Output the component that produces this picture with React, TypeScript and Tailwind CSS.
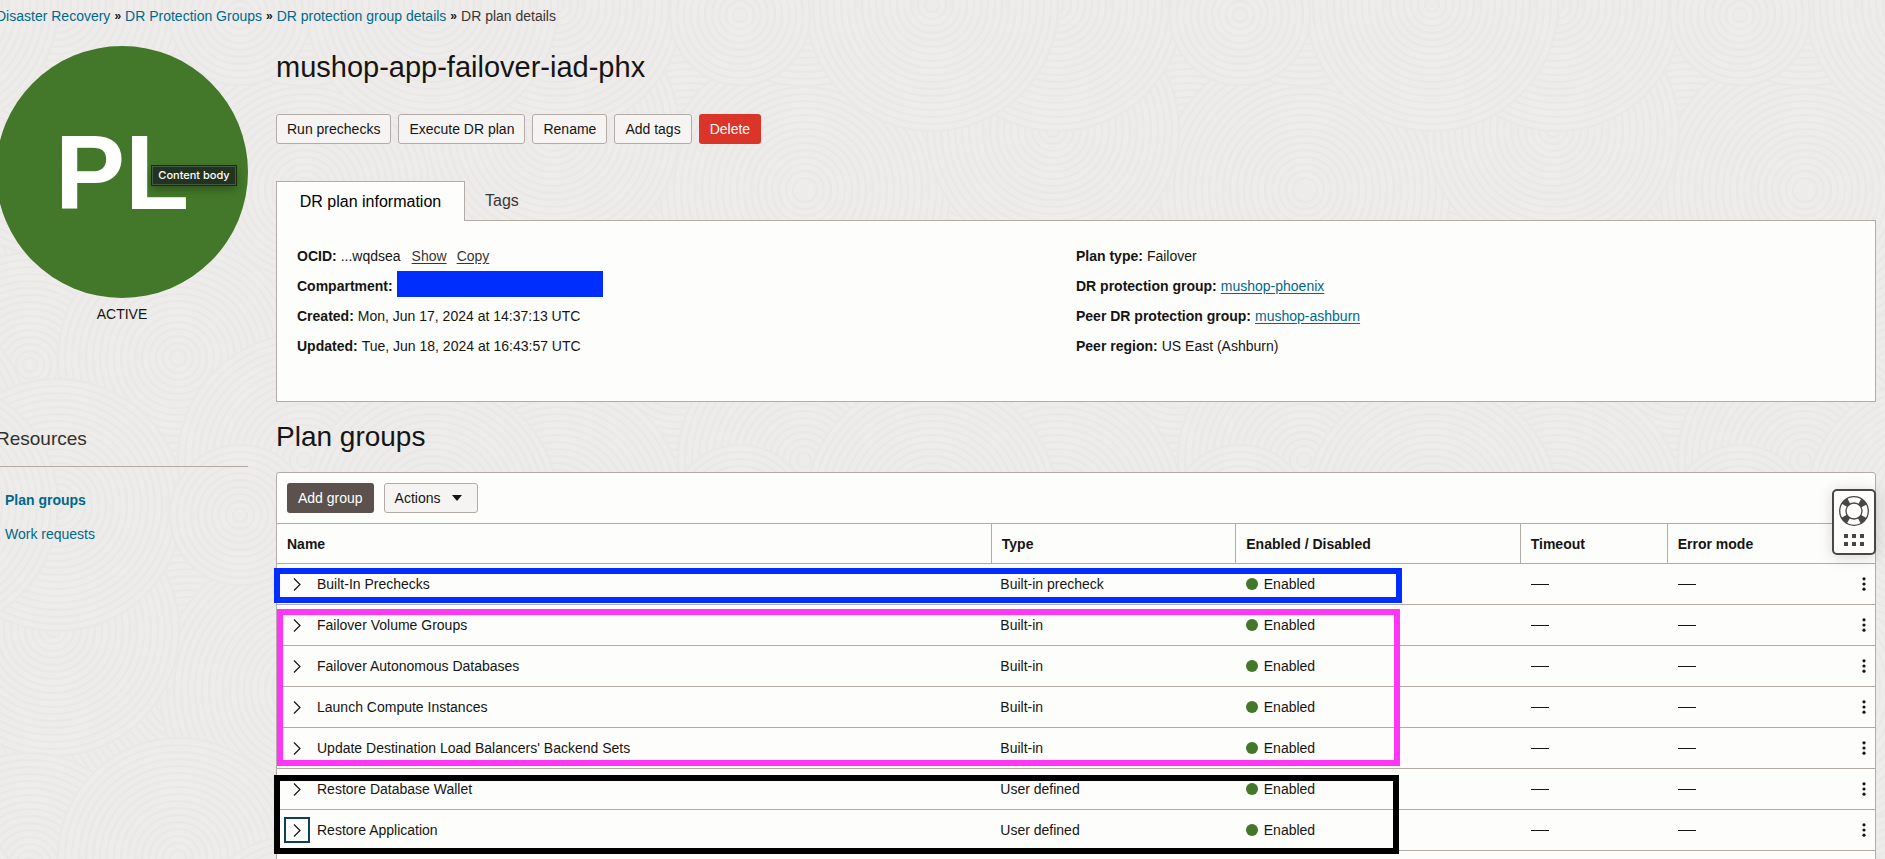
import React from "react";

const crumbs = ["Disaster Recovery", "DR Protection Groups", "DR protection group details"];

const groups = [
  { name: "Built-In Prechecks", type: "Built-in precheck" },
  { name: "Failover Volume Groups", type: "Built-in" },
  { name: "Failover Autonomous Databases", type: "Built-in" },
  { name: "Launch Compute Instances", type: "Built-in" },
  { name: "Update Destination Load Balancers' Backend Sets", type: "Built-in" },
  { name: "Restore Database Wallet", type: "User defined" },
  { name: "Restore Application", type: "User defined", focused: true },
];

const swirls = [
  { x: 417, y: 300, r: 150 },
  { x: 190, y: 190, r: 135 },
  { x: 305, y: 190, r: 145 },
  { x: 53, y: 130, r: 126 },
  { x: 30, y: 365, r: 112 },
  { x: 178, y: 358, r: 120 },
  { x: 417, y: 420, r: 110 },
  { x: 304, y: 460, r: 126 },
  { x: 57, y: 5, r: 126 },
  { x: 432, y: 5, r: 126 },
  { x: 240, y: 15, r: 70 },
];

const offsets = [-500, 0, 500];

function Backdrop() {
  return (
    <svg className="absolute inset-0 -z-10 h-full w-full" aria-hidden="true">
      <defs>
        <pattern id="swirls" width="500" height="500" patternUnits="userSpaceOnUse">
          <rect width="500" height="500" fill="#edecea" />
          {swirls.flatMap((s, i) =>
            offsets.flatMap((dx) =>
              offsets.map((dy) => (
                <g key={`${i}/${dx}/${dy}`} transform={`translate(${s.x + dx} ${s.y + dy})`}>
                  <circle r={s.r} fill="#edecea" />
                  {Array.from({ length: Math.floor(s.r / 7) }, (_, n) => (
                    <circle key={n} r={s.r - n * 7} fill="none" stroke="#e9e8e6" strokeWidth="2" />
                  ))}
                </g>
              )),
            ),
          )}
        </pattern>
      </defs>
      <rect width="100%" height="100%" fill="url(#swirls)" />
    </svg>
  );
}

function ActionButton({ children }: { children: React.ReactNode }) {
  return (
    <button className="h-[30px] rounded-[3px] border border-[#b3aca6] bg-[#f6f4f2] px-[10px]">{children}</button>
  );
}

function Field({ label, children }: { label: string; children: React.ReactNode }) {
  return (
    <div className="flex h-[30px] items-center gap-1">
      <dt className="font-bold">{label}</dt>
      <dd className="flex items-center">{children}</dd>
    </div>
  );
}

function SupportWidget() {
  return (
    <button
      aria-label="Support"
      className="absolute top-4 -right-px flex h-[66px] w-11 flex-col items-center justify-between rounded-[5px] border-2 border-[#4b4643] bg-[#fdfdfb] pt-[5px] pb-[7px] shadow-[0_2px_16px_rgba(0,0,40,0.16)]"
    >
      <svg width="30" height="30" viewBox="0 0 30 30" fill="none" stroke="#4b4643">
        <circle cx="15" cy="15" r="11.2" strokeWidth="7" strokeDasharray="6.2 11.393" strokeDashoffset="-5.7" />
        <circle cx="15" cy="15" r="14.3" strokeWidth="1.3" />
        <circle cx="15" cy="15" r="8" strokeWidth="1.3" />
      </svg>
      <svg width="20" height="12" viewBox="0 0 20 12" fill="#4b4643">
        {[0, 8, 16].map((x) => (
          <React.Fragment key={x}>
            <rect x={x} width="4" height="4" />
            <rect x={x} y="8" width="4" height="4" />
          </React.Fragment>
        ))}
      </svg>
    </button>
  );
}

export default function App() {
  return (
    <div className="relative isolate h-screen overflow-hidden font-['Liberation_Sans',Arial,sans-serif] text-sm leading-5 text-[#161513]">
      <Backdrop />
      <nav aria-label="Breadcrumb" className="-ml-1 flex items-center gap-1 pt-[6px]">
        {crumbs.map((c) => (
          <React.Fragment key={c}>
            <a href="#" className="text-[#00688c]">{c}</a>
            <span className="text-xs font-bold leading-5 text-[#161513]">»</span>
          </React.Fragment>
        ))}
        <span className="text-[#3a3632]">DR plan details</span>
      </nav>

      <div className="flex pr-[9px]">
        <aside className="-ml-1 w-[252px] shrink-0 pt-5">
          <div className="relative flex h-[252px] w-[252px] items-center justify-center rounded-full bg-[#437729] text-[105px] leading-none font-bold text-white">
            PL
            <span className="absolute top-[120px] left-[156px] flex h-[19px] w-[84px] items-center justify-center border border-[#46584a] bg-[#223420] font-['Inter',sans-serif] text-[11px] leading-none font-medium outline outline-[#1a2a18] shadow-[0_4px_8px_rgba(0,0,0,0.3)]">
              Content body
            </span>
          </div>
          <p className="mt-[6px] text-center">ACTIVE</p>
          <h2 className="mt-[103px] border-b border-[#b3aca6] pb-[15px] text-[19px] leading-6 text-[#33302d]">Resources</h2>
          <ul className="mt-4 pl-[9px]">
            <li className="flex h-[34px] items-center">
              <a href="#" className="font-bold text-[#00688c]">Plan groups</a>
            </li>
            <li className="flex h-[34px] items-center">
              <a href="#" className="text-[#00688c]">Work requests</a>
            </li>
          </ul>
        </aside>

        <main className="ml-7 min-w-0 flex-1">
          <h1 className="pt-[25px] text-[29px] leading-8">mushop-app-failover-iad-phx</h1>
          <div className="mt-[31px] flex gap-[7px]">
            <ActionButton>Run prechecks</ActionButton>
            <ActionButton>Execute DR plan</ActionButton>
            <ActionButton>Rename</ActionButton>
            <ActionButton>Add tags</ActionButton>
            <button className="h-[30px] rounded-[3px] bg-[#db3428] px-[11px] text-white">Delete</button>
          </div>

          <div role="tablist" className="relative z-10 mt-[37px] -mb-px flex text-base leading-5">
            <button role="tab" aria-selected="true" className="h-10 w-[189px] border border-b-0 border-[#b3aca6] bg-[#fdfdfb] text-black">
              DR plan information
            </button>
            <button role="tab" aria-selected="false" className="h-[39px] px-5 text-[#3a3632]">Tags</button>
          </div>
          <section className="grid h-[182px] grid-cols-[779fr_799fr] border border-[#b3aca6] bg-[#fdfdfb] pt-5 pl-5">
            <dl>
              <Field label="OCID:">
                ...wqdsea
                <a href="#" className="ml-[11px] text-[#3a3632] underline underline-offset-2">Show</a>
                <a href="#" className="ml-[10px] text-[#3a3632] underline underline-offset-2">Copy</a>
              </Field>
              <Field label="Compartment:">
                <span className="mb-1 h-[26px] w-[206px] bg-[#002eff]" />
              </Field>
              <Field label="Created:">Mon, Jun 17, 2024 at 14:37:13 UTC</Field>
              <Field label="Updated:">Tue, Jun 18, 2024 at 16:43:57 UTC</Field>
            </dl>
            <dl>
              <Field label="Plan type:">Failover</Field>
              <Field label="DR protection group:">
                <a href="#" className="text-[#00688c] underline underline-offset-2">mushop-phoenix</a>
              </Field>
              <Field label="Peer DR protection group:">
                <a href="#" className="text-[#00688c] underline underline-offset-2">mushop-ashburn</a>
              </Field>
              <Field label="Peer region:">US East (Ashburn)</Field>
            </dl>
          </section>

          <h2 className="pt-[19px] text-[28px] leading-8">Plan groups</h2>
          <section className="relative mt-[19px] rounded-t-[3px] border border-[#b3aca6] bg-[#fdfdfb]">
            <div className="flex h-[50px] items-center gap-[10px] px-[10px]">
              <button className="h-[30px] rounded-[3px] bg-[#5b514d] px-[11px] text-white">Add group</button>
              <button className="flex h-[30px] items-center gap-[11px] rounded-[3px] border border-[#b3aca6] bg-[#f6f4f2] pr-[15px] pl-[10px]">
                Actions
                <svg width="10" height="6" viewBox="0 0 10 6"><path d="M0 0h10L5 6z" fill="#161513" /></svg>
              </button>
            </div>
            <table className="w-full table-fixed border-collapse text-left">
              <colgroup>
                <col className="w-[44.7%]" />
                <col className="w-[15.3%]" />
                <col className="w-[17.8%]" />
                <col className="w-[9.2%]" />
                <col className="w-[13%]" />
              </colgroup>
              <thead>
                <tr className="h-10 border-y border-[#b3aca6]">
                  <th className="pl-[10px]">Name</th>
                  <th className="border-l border-[#b3aca6] pl-[10px]">Type</th>
                  <th className="border-l border-[#b3aca6] pl-[10px]">Enabled / Disabled</th>
                  <th className="border-l border-[#b3aca6] pl-[10px]">Timeout</th>
                  <th className="border-l border-[#b3aca6] pl-[10px]">Error mode</th>
                </tr>
              </thead>
              <tbody>
                {groups.map((g) => (
                  <tr key={g.name} className="h-[41px] border-b border-[#b3aca6]">
                    <td className="pl-[7px]">
                      <div className="flex items-center gap-[7px]">
                        <button
                          aria-label={`Expand ${g.name}`}
                          className={`flex h-[26px] w-[26px] items-center justify-center border-2 ${g.focused ? "border-[#0d4256]" : "border-transparent"}`}
                        >
                          <svg width="8" height="13" viewBox="0 0 8 13" fill="none" stroke="#161513" strokeWidth="1.2">
                            <path d="M1 .5l6 6-6 6" />
                          </svg>
                        </button>
                        {g.name}
                      </div>
                    </td>
                    <td className="pl-[9px]">{g.type}</td>
                    <td className="pl-[10px]">
                      <div className="flex items-center gap-[6px]">
                        <span className="h-3 w-3 rounded-full bg-[#437729]" />
                        Enabled
                      </div>
                    </td>
                    <td className="pl-[11px]"><div className="h-px w-[18px] bg-[#161513]" /></td>
                    <td className="pr-[9px] pl-[11px]">
                      <div className="flex items-center justify-between">
                        <span className="h-px w-[18px] bg-[#161513]" />
                        <button aria-label={`Actions for ${g.name}`}>
                          <svg width="4" height="14" viewBox="0 0 4 14" fill="#161513">
                            <circle cx="2" cy="1.8" r="1.6" /><circle cx="2" cy="7" r="1.6" /><circle cx="2" cy="12.2" r="1.6" />
                          </svg>
                        </button>
                      </div>
                    </td>
                  </tr>
                ))}
              </tbody>
            </table>
            <div className="h-10" />
            <SupportWidget />
            <div className="pointer-events-none absolute top-[95px] -left-[3px] h-[35px] w-[70.6%] border-[6px] border-[#002eff]" />
            <div className="pointer-events-none absolute top-[136px] left-0 h-[157px] w-[70.3%] border-[6px] border-[#ff36f5]" />
            <div className="pointer-events-none absolute top-[302px] -left-[3px] h-[79px] w-[70.4%] border-[6px] border-black" />
          </section>
        </main>
      </div>
    </div>
  );
}
